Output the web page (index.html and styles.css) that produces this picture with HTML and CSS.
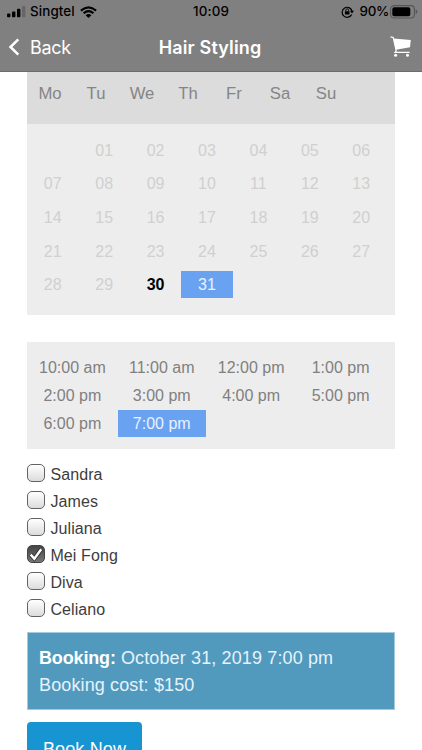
FILE: index.html
```html
<!DOCTYPE html>
<html lang="en">
<head>
<meta charset="utf-8">
<title>Hair Styling</title>
<link rel="stylesheet" href="styles.css">
</head>
<body>
<header class="top">
  <div class="status">
    <div class="carrier">
      <svg width="19" height="12" viewBox="0 0 19 12"><rect x="0" y="7.5" width="3.4" height="3.7" rx="1"/><rect x="5" y="5.5" width="3.4" height="5.7" rx="1"/><rect x="10" y="2.8" width="3.4" height="8.4" rx="1"/><rect x="15" y="0" width="3.4" height="11.2" rx="1" fill="#666"/></svg>
      <span class="name">Singtel</span>
      <svg width="17" height="12" viewBox="0 0 17 12" fill="none" stroke="#000" stroke-width="2.1"><path d="M.9 4.6Q8.5-2 16.1 4.6M3.6 7.3q4.9-4.2 9.8 0"/><path d="M8.5 12 5.6 9.2q2.9-2.3 5.8 0z" fill="#000" stroke="none"/></svg>
    </div>
    <span class="clock">10:09</span>
    <div class="power">
      <svg width="13" height="12" viewBox="0 0 13 12"><path d="M10.6 8.6A5 5 0 1 1 11 5" fill="none" stroke="#000" stroke-width="1.2"/><path d="M8.9 4.8h4.1L11 7.5z"/><rect x="3.9" y="5.2" width="4.6" height="3.3" rx=".4"/><path d="M4.8 5.4V4.2a1.4 1.4 0 0 1 2.8 0v1.2" fill="none" stroke="#000" stroke-width=".9"/></svg>
      <span class="percent">90%</span>
      <svg width="28" height="14" viewBox="0 0 28 14"><rect x=".6" y=".6" width="23.8" height="12.4" rx="3.4" fill="none" stroke="#555" stroke-width="1.1"/><rect x="2.3" y="2.3" width="18" height="9" rx="1.8"/><path d="M25.7 4.6q1.7.5 1.7 2.2t-1.7 2.2z" fill="#555"/></svg>
    </div>
  </div>
  <nav class="bar">
    <a class="back"><svg width="12" height="18" viewBox="0 0 12 18"><path d="M10.3 1.3 2.5 9l7.8 7.7" fill="none" stroke="#fff" stroke-width="2.5"/></svg><span class="back-label">Back</span></a>
    <h1 class="title">Hair Styling</h1>
    <svg class="cart" width="22" height="22" viewBox="0 0 22 22"><path d="M3.4 2.6 20.8 4.1 20 11.3 6 13.7z" fill="#fff"/><path d="M.5.8 3.2 1.4 6.2 14.8 5 16.4H19.6" fill="none" stroke="#fff" stroke-width="1.2"/><circle cx="5.6" cy="19.2" r="1.5" fill="#fff"/><circle cx="17.5" cy="19.2" r="1.5" fill="#fff"/></svg>
  </nav>
</header>
<main class="content">
  <section class="calendar">
    <div class="week"><span>Mo</span><span>Tu</span><span>We</span><span>Th</span><span>Fr</span><span>Sa</span><span>Su</span></div>
    <div class="days">
      <span></span><span>01</span><span>02</span><span>03</span><span>04</span><span>05</span><span>06</span>
      <span>07</span><span>08</span><span>09</span><span>10</span><span>11</span><span>12</span><span>13</span>
      <span>14</span><span>15</span><span>16</span><span>17</span><span>18</span><span>19</span><span>20</span>
      <span>21</span><span>22</span><span>23</span><span>24</span><span>25</span><span>26</span><span>27</span>
      <span>28</span><span>29</span><span class="today">30</span><span class="selected">31</span>
    </div>
  </section>
  <section class="times">
    <span>10:00 am</span><span>11:00 am</span><span>12:00 pm</span><span>1:00 pm</span>
    <span>2:00 pm</span><span>3:00 pm</span><span>4:00 pm</span><span>5:00 pm</span>
    <span>6:00 pm</span><span class="selected">7:00 pm</span>
  </section>
  <section class="staff">
    <label><i class="box"></i><span>Sandra</span></label>
    <label><i class="box"></i><span>James</span></label>
    <label><i class="box"></i><span>Juliana</span></label>
    <label><i class="box checked"><svg width="16" height="16" viewBox="0 0 16 16"><path d="M2.7 8.7 6.3 12.7 13.2 3.3" fill="none" stroke="#222" stroke-width="4"/><path d="M2.7 8.7 6.3 12.7 13.2 3.3" fill="none" stroke="#fff" stroke-width="2.5"/></svg></i><span>Mei Fong</span></label>
    <label><i class="box"></i><span>Diva</span></label>
    <label><i class="box"></i><span>Celiano</span></label>
  </section>
  <section class="summary">
    <div class="when"><b>Booking:</b> October 31, 2019 7:00 pm</div>
    <div class="cost">Booking cost: $150</div>
  </section>
  <button class="book">Book Now</button>
</main>
</body>
</html>
```
FILE: styles.css
```css
* { box-sizing: border-box; }
body {
  margin: 0;
  height: 750px;
  overflow: hidden;
  background: #fff;
  font: 16px/27px "Liberation Sans", Arial, sans-serif;
}
svg { display: block; flex: none; }
.top {
  height: 72px;
  background: #808080;
  border-bottom: 1px solid #6c6c6c;
  font-family: Inter, sans-serif;
}
.status {
  display: grid;
  grid-template-columns: 1fr auto 1fr;
  align-items: center;
  height: 23px;
  padding: 0 7px;
  font-size: 13.4px;
  font-weight: 500;
  line-height: 23px;
  color: #000;
}
.carrier, .power { display: flex; align-items: center; }
.carrier .name { margin: 0 5px 0 4px; letter-spacing: .1px; }
.clock { letter-spacing: .1px; }
.power { justify-content: flex-end; margin-right: -3px; }
.percent { margin: 0 1px 0 6px; letter-spacing: -.3px; }
.bar {
  display: grid;
  grid-template-columns: 1fr auto 1fr;
  align-items: center;
  height: 48px;
  padding: 0 10px 0 8px;
  color: #fff;
}
.back { display: flex; align-items: center; gap: 10px; font-size: 18px; letter-spacing: -.3px; }
.title { margin: 0; font-size: 18px; font-weight: 600; letter-spacing: .15px; }
.cart { justify-self: end; }
.content { padding: 0 27px; }
.calendar { height: 243px; background: #ededed; }
.week {
  display: grid;
  grid-template-columns: repeat(8, 1fr);
  height: 52px;
  padding-top: 8px;
  background: #dcdcdc;
  color: #858585;
  font-size: 16.7px;
  text-align: center;
}
.days {
  display: grid;
  grid-template-columns: repeat(7, 51.43px);
  grid-auto-rows: 27px;
  row-gap: 6.7px;
  padding-top: 12.5px;
  color: #d0d0d0;
  text-align: center;
}
.today { color: #000; font-weight: bold; }
.selected { background: #6aa2f2; color: #e9f2ff; }
.times {
  display: grid;
  grid-template-columns: repeat(4, 88.4px);
  grid-auto-rows: 27px;
  gap: 1px;
  height: 107px;
  margin-top: 27px;
  padding: 12.4px 0 0 1.2px;
  background: #ededed;
  color: #808080;
  text-align: center;
}
.staff { padding-top: 12px; color: #3d3d3d; }
.staff label { display: flex; height: 27px; }
.staff span { letter-spacing: .1px; }
.box {
  width: 18px;
  height: 18px;
  margin: 2.5px 5.4px 0 0;
  border: 1.4px solid #626262;
  border-radius: 5px;
  background: linear-gradient(#fff, #dcdcdc);
}
.box.checked { border-color: #444; background: linear-gradient(#444, #777); }
.summary {
  height: 78px;
  margin-top: 9px;
  padding: 12px 11px;
  border: 1px solid #a3cbe0;
  background: #5299be;
  color: #e5f3fc;
  font-size: 18px;
  letter-spacing: .13px;
}
.summary b { color: #fff; letter-spacing: -.15px; }
.book {
  display: block;
  width: 115px;
  height: 54px;
  margin-top: 12px;
  padding: 0;
  border: 0;
  border-radius: 4px;
  background: #1795d2;
  color: #fff;
  font: 18px/54px "Liberation Sans", Arial, sans-serif;
  letter-spacing: .15px;
}
```
